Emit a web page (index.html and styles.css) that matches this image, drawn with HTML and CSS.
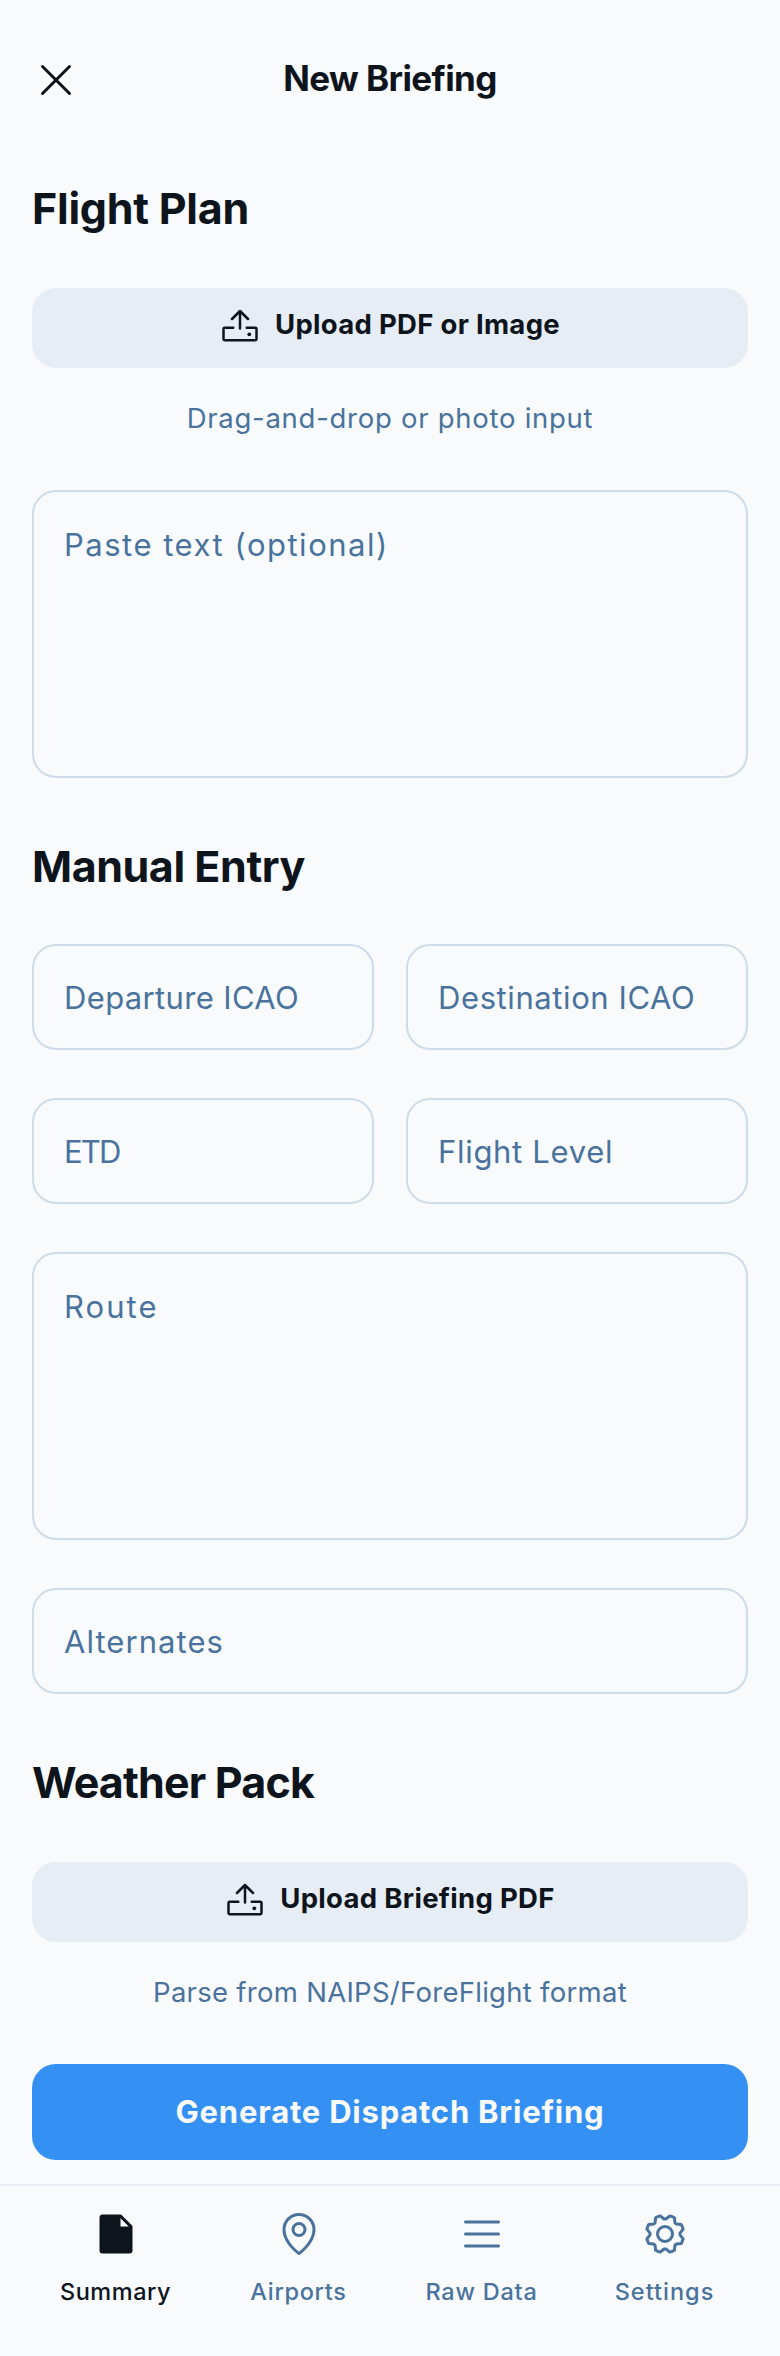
FILE: index.html
```html
<!DOCTYPE html>
<html lang="en">
<head>
<meta charset="utf-8">
<title>New Briefing</title>
<link rel="stylesheet" href="styles.css">
</head>
<body>
<header class="header">
  <button class="close" aria-label="Close">
    <svg class="icon line" viewBox="0 0 256 256"><path d="M56 56L200 200M200 56L56 200"/></svg>
  </button>
  <h1 class="title">New Briefing</h1>
</header>
<main class="content">
  <h2 class="heading flight-plan">Flight Plan</h2>
  <button class="upload">
    <svg class="upload-icon" viewBox="0 0 40 40"><path d="M20 24.5V7M12 15L20 7L28 15M13.3 23.7H4.7A1.2 1.2 0 0 0 3.5 24.9V35.1A1.2 1.2 0 0 0 4.7 36.3H35.3A1.2 1.2 0 0 0 36.5 35.1V24.9A1.2 1.2 0 0 0 35.3 23.7H26.7"/><circle cx="29.3" cy="30.3" r="1.9"/></svg>
    <span>Upload PDF or Image</span>
  </button>
  <p class="hint drag">Drag-and-drop or photo input</p>
  <textarea class="field area paste" placeholder="Paste text (optional)"></textarea>

  <h2 class="heading manual">Manual Entry</h2>
  <div class="form">
    <input class="field departure" placeholder="Departure ICAO">
    <input class="field destination" placeholder="Destination ICAO">
    <input class="field etd" placeholder="ETD">
    <input class="field level" placeholder="Flight Level">
    <textarea class="field area wide route" placeholder="Route"></textarea>
    <input class="field wide alternates" placeholder="Alternates">
  </div>

  <h2 class="heading weather">Weather Pack</h2>
  <button class="upload">
    <svg class="upload-icon" viewBox="0 0 40 40"><path d="M20 24.5V7M12 15L20 7L28 15M13.3 23.7H4.7A1.2 1.2 0 0 0 3.5 24.9V35.1A1.2 1.2 0 0 0 4.7 36.3H35.3A1.2 1.2 0 0 0 36.5 35.1V24.9A1.2 1.2 0 0 0 35.3 23.7H26.7"/><circle cx="29.3" cy="30.3" r="1.9"/></svg>
    <span>Upload Briefing PDF</span>
  </button>
  <p class="hint parse">Parse from NAIPS/ForeFlight format</p>
  <button class="generate">Generate Dispatch Briefing</button>
</main>
<nav class="nav">
  <a class="tab active summary">
    <svg class="icon solid" viewBox="0 0 256 256"><path d="M213.66,82.34l-56-56A8,8,0,0,0,152,24H56A16,16,0,0,0,40,40V216a16,16,0,0,0,16,16H200a16,16,0,0,0,16-16V88A8,8,0,0,0,213.66,82.34ZM152,88V44l44,44Z"/></svg>
    <span>Summary</span>
  </a>
  <a class="tab airports">
    <svg class="icon solid" viewBox="0 0 256 256"><path d="M128,64a40,40,0,1,0,40,40A40,40,0,0,0,128,64Zm0,64a24,24,0,1,1,24-24A24,24,0,0,1,128,128Zm0-112a88.1,88.1,0,0,0-88,88c0,31.4,14.51,64.68,42,96.25a254.19,254.19,0,0,0,41.45,38.3,8,8,0,0,0,9.18,0A254.19,254.19,0,0,0,174,200.25c27.45-31.57,42-64.85,42-96.25A88.1,88.1,0,0,0,128,16Zm0,206c-16.53-13-72-60.75-72-118a72,72,0,0,1,144,0C200,161.23,144.53,209,128,222Z"/></svg>
    <span>Airports</span>
  </a>
  <a class="tab raw-data">
    <svg class="icon line" viewBox="0 0 256 256"><path d="M40 64H216M40 128H216M40 192H216"/></svg>
    <span>Raw Data</span>
  </a>
  <a class="tab settings">
    <svg class="icon line" viewBox="0 0 256 256"><circle cx="128" cy="128" r="40"/><path d="M41.43,178.09A99.14,99.14,0,0,1,31.36,153.8l16.78-21a81.59,81.59,0,0,1,0-9.64l-16.77-21a99.43,99.43,0,0,1,10.05-24.3l26.71-3a81,81,0,0,1,6.81-6.81l3-26.7A99.14,99.14,0,0,1,102.2,31.36l21,16.78a81.59,81.59,0,0,1,9.64,0l21-16.77a99.43,99.43,0,0,1,24.3,10.05l3,26.71a81,81,0,0,1,6.81,6.81l26.7,3a99.14,99.14,0,0,1,10.07,24.29l-16.78,21a81.59,81.59,0,0,1,0,9.64l16.77,21a99.43,99.43,0,0,1-10,24.3l-26.71,3a81,81,0,0,1-6.81,6.81l-3,26.7a99.14,99.14,0,0,1-24.29,10.07l-21-16.78a81.59,81.59,0,0,1-9.64,0l-21,16.77a99.43,99.43,0,0,1-24.3-10l-3-26.71a81,81,0,0,1-6.81-6.81Z"/></svg>
    <span>Settings</span>
  </a>
</nav>
</body>
</html>
```
FILE: styles.css
```css
* { box-sizing: border-box; }
body {
  margin: 0;
  min-height: 2356px;
  display: flex;
  flex-direction: column;
  background: #f8fafc;
  color: #0d141c;
  font-family: Inter, "Liberation Sans", sans-serif;
}
button, input, textarea { font: inherit; color: inherit; border: 0; margin: 0; padding: 0; background: none; }
.icon { width: 48px; height: 48px; display: block; }
.solid { fill: currentColor; }
.line { fill: none; stroke: currentColor; stroke-width: 16; stroke-linecap: round; stroke-linejoin: round; }

.header { height: 160px; padding: 0 32px; display: flex; align-items: center; }
.title {
  flex: 1;
  margin: 0;
  padding: 0 48px 5px 0;
  text-align: center;
  font-size: 35px;
  line-height: 46px;
  font-weight: 700;
  letter-spacing: -0.6px;
}

.content { padding: 0 32px 24px; display: flex; flex-direction: column; }
.heading { margin: 0 0 32px; font-size: 43px; line-height: 96px; font-weight: 700; }
.flight-plan { letter-spacing: -0.24px; }
.manual { margin: 40px 0 30px; letter-spacing: -0.43px; }
.weather { margin-top: 40px; letter-spacing: -0.82px; }

.upload {
  height: 80px;
  padding: 16px 0;
  display: flex;
  justify-content: center;
  align-items: flex-start;
  gap: 15px;
  border-radius: 24px;
  background: #e7edf4;
  font-size: 27.5px;
  line-height: 40px;
  font-weight: 700;
  letter-spacing: 0.3px;
}
.upload-icon { width: 40px; height: 40px; fill: none; stroke: currentColor; stroke-width: 2.5; stroke-linecap: round; stroke-linejoin: round; }
.upload-icon circle { fill: currentColor; stroke: none; }

.hint { margin: 0 0 22px; text-align: center; font-size: 27.5px; line-height: 100px; color: #49739c; }
.drag { letter-spacing: 0.73px; }
.parse { letter-spacing: 0.28px; }

.field {
  display: block;
  width: 100%;
  height: 106px;
  padding: 0 30px;
  border: 2px solid #cedbe8;
  border-radius: 24px;
  background: #f8fafc;
  font-size: 31px;
  line-height: 42px;
}
.field::placeholder { color: #49739c; opacity: 1; }
.area { height: 288px; padding: 32px 30px; resize: none; overflow: hidden; }
.form { display: grid; grid-template-columns: 1fr 1fr; gap: 48px 32px; }
.wide { grid-column: span 2; }
.paste { letter-spacing: 1.51px; }
.departure { letter-spacing: 0.35px; }
.destination { letter-spacing: 0.59px; }
.etd { letter-spacing: -1.8px; }
.level { letter-spacing: 0.69px; }
.route { letter-spacing: 2.06px; }
.alternates { letter-spacing: 1.05px; }

.generate {
  height: 96px;
  padding-bottom: 2px;
  border-radius: 24px;
  background: #3490f3;
  color: #f8fafc;
  font-size: 31px;
  font-weight: 700;
  letter-spacing: 0.78px;
}

.nav {
  flex: 1;
  display: flex;
  gap: 16px;
  padding: 24px 32px 0;
  border-top: 2px solid #e7edf4;
}
.tab {
  flex: 1 1 0;
  display: flex;
  flex-direction: column;
  align-items: center;
  gap: 16px;
  color: #49739c;
  font-size: 23.5px;
  line-height: 36px;
  font-weight: 500;
}
.active { color: #0d141c; }
.summary { letter-spacing: 0.52px; }
.airports { letter-spacing: 0.7px; }
.raw-data { letter-spacing: 0.77px; }
.settings { letter-spacing: 1px; }
```
